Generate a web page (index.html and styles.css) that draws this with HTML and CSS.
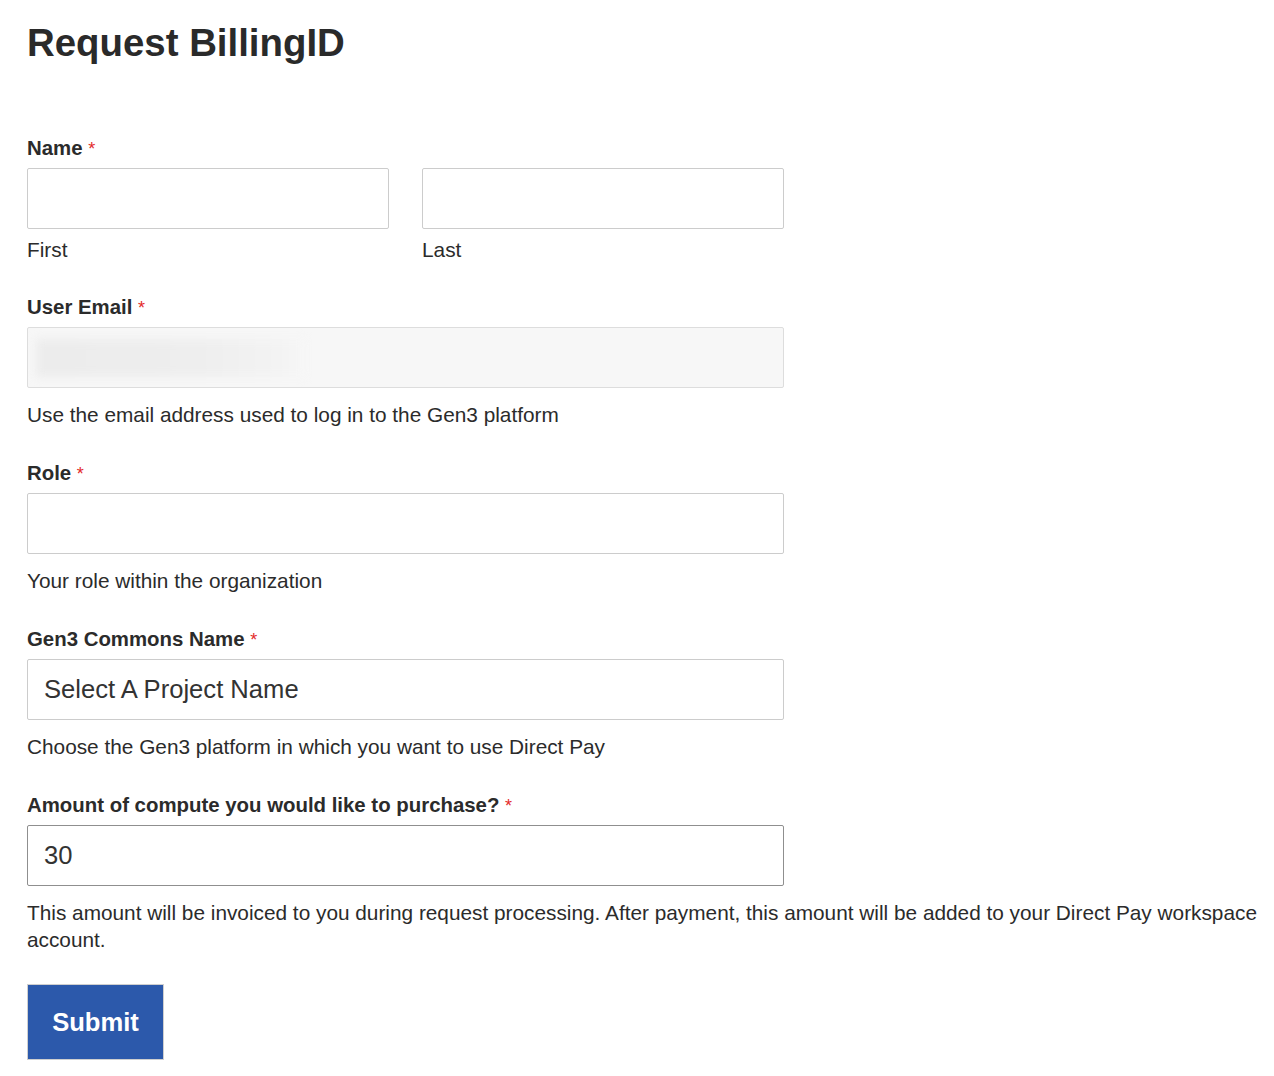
FILE: index.html
```html
<!DOCTYPE html>
<html lang="en">
<head>
<meta charset="utf-8">
<title>Request BillingID</title>
<link rel="stylesheet" href="styles.css">
</head>
<body>
<main class="page">
  <h1 class="title">Request BillingID</h1>
  <form class="form">
    <div class="field">
      <div class="label">Name <span class="req">*</span></div>
      <div class="name-row">
        <div class="name-col">
          <div class="input"></div>
          <div class="sublabel">First</div>
        </div>
        <div class="name-col">
          <div class="input"></div>
          <div class="sublabel">Last</div>
        </div>
      </div>
    </div>
    <div class="field">
      <div class="label">User Email <span class="req">*</span></div>
      <div class="input input-disabled"><div class="blur"></div></div>
      <div class="helper">Use the email address used to log in to the Gen3 platform</div>
    </div>
    <div class="field">
      <div class="label">Role <span class="req">*</span></div>
      <div class="input"></div>
      <div class="helper">Your role within the organization</div>
    </div>
    <div class="field">
      <div class="label">Gen3 Commons Name <span class="req">*</span></div>
      <div class="input"><span class="value">Select A Project Name</span></div>
      <div class="helper">Choose the Gen3 platform in which you want to use Direct Pay</div>
    </div>
    <div class="field">
      <div class="label">Amount of compute you would like to purchase? <span class="req">*</span></div>
      <div class="input input-active"><span class="value">30</span></div>
      <div class="helper">This amount will be invoiced to you during request processing. After payment, this amount will be added to your Direct Pay workspace account.</div>
    </div>
    <div class="actions">
      <button type="button" class="submit">Submit</button>
    </div>
  </form>
</main>
</body>
</html>
```

FILE: styles.css
```css
html, body {
  margin: 0;
  padding: 0;
  background: #ffffff;
}

body {
  font-family: "Liberation Sans", Arial, sans-serif;
  color: #2b2b2b;
}

.page {
  padding: 20px 12px 0 27px;
}

.title {
  margin: 0;
  font-size: 38.4px;
  line-height: 46px;
  font-weight: 700;
  color: #2a2a2a;
}

.form {
  margin-top: 70px;
  display: flex;
  flex-direction: column;
  gap: 32px;
}

.field {
  display: flex;
  flex-direction: column;
}

.label {
  font-size: 20.4px;
  line-height: 24px;
  height: 24px;
  font-weight: 700;
  margin-bottom: 8px;
}

.req {
  color: #e32a2a;
  font-weight: 400;
  font-size: 18px;
  line-height: 0;
}

.name-row {
  display: flex;
  gap: 33px;
  width: 757px;
}

.name-col {
  flex: 1;
}

.input {
  box-sizing: border-box;
  width: 757px;
  height: 61px;
  border: 1px solid #cccccc;
  border-radius: 2px;
  background: #fff;
  display: flex;
  align-items: center;
  padding: 0 16px;
}

.name-col .input {
  width: 100%;
}

.input-disabled {
  background: #f7f7f7;
  border-color: #dddddd;
  padding: 0 8px;
}

.blur {
  width: 270px;
  height: 38px;
  background: linear-gradient(90deg, #ececec 0%, #eeeeee 60%, #f3f3f3 90%, #f7f7f7 100%);
  filter: blur(4px);
}

.input-active {
  border-color: #8f8f8f;
}

.value {
  font-size: 25.6px;
  color: #333;
}

.sublabel {
  font-size: 20.8px;
  line-height: 27px;
  height: 27px;
  margin-top: 7px;
}

.helper {
  font-size: 20.8px;
  line-height: 27px;
  margin-top: 13px;
  margin-bottom: 1px;
}

.actions {
  margin-top: -2px;
}

.submit {
  box-sizing: border-box;
  width: 137px;
  height: 76px;
  background: #2c59ab;
  color: #fff;
  border: 1px solid #cfcfcf;
  font-family: "Liberation Sans", Arial, sans-serif;
  font-size: 25.6px;
  font-weight: 700;
  padding: 0;
  cursor: pointer;
}
```
